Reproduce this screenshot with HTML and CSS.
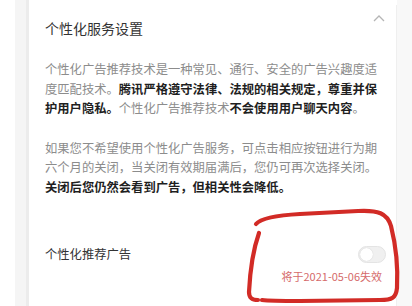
FILE: index.html
```html
<!DOCTYPE html>
<html lang="zh">
<head>
<meta charset="utf-8">
<link rel="stylesheet" href="styles.css">
</head>
<body>
<div class="page">
  <div class="gutter-white"></div>
  <div class="gutter-gray"></div>
  <div class="card">
    <div class="header">
      <div class="title">个性化服务设置</div>
      <svg class="chevron" width="12" height="7" viewBox="0 0 12 7"><path d="M1 6 L6 1 L11 6" fill="none" stroke="#b5b5b5" stroke-width="1.3"/></svg>
    </div>
    <p class="para">个性化广告推荐技术是一种常见、通行、安全的广告兴趣度适度匹配技术。<b>腾讯严格遵守法律、法规的相关规定，尊重并保护用户隐私。</b>个性化广告推荐技术<b>不会使用用户聊天内容</b>。</p>
    <p class="para">如果您不希望使用个性化广告服务，可点击相应按钮进行为期六个月的关闭，当关闭有效期届满后，您仍可再次选择关闭。<b>关闭后您仍然会看到广告，但相关性会降低。</b></p>
    <div class="setting">
      <div class="setting-row">
        <span class="label">个性化推荐广告</span>
        <span class="toggle"><span class="knob"></span></span>
      </div>
      <div class="expire">将于2021-05-06失效</div>
    </div>
  </div>
  <div class="gutter-right"></div>
  <svg class="marker" width="412" height="306" viewBox="0 0 412 306">
    <path d="M256 224 C262 217 282 215 300 214 L358 211 C378 210 387 213 391 226 C396 246 398 270 397 288 C396 298 392 300 380 300 L300 301 C285 301 270 301 262 300" fill="none" stroke="#d22b26" stroke-width="4.2" stroke-linecap="round"/>
    <path d="M259 233 C253 250 250 272 249 292 C249 298 252 300 258 300" fill="none" stroke="#d22b26" stroke-width="4.2" stroke-linecap="round"/>
  </svg>
</div>
</body>
</html>
```

FILE: styles.css
```css
html, body {
  margin: 0;
  padding: 0;
  background: #ffffff;
}
body {
  font-family: "Noto Sans CJK SC", "Noto Sans", sans-serif;
}
.page {
  position: relative;
  display: flex;
  width: 412px;
  height: 306px;
  overflow: hidden;
}
.gutter-white {
  width: 15px;
  flex: none;
  background: #ffffff;
}
.gutter-gray {
  width: 11px;
  flex: none;
  background: #f5f5f5;
  border-right: 3px solid #ececec;
  margin-right: 2px;
}
.card {
  width: 351px;
  flex: none;
  background: #ffffff;
  margin-top: 5px;
  padding: 13px 0 0 14px;
  border-right: 1px solid #efefef;
}
.gutter-right {
  flex: 1;
  background: #f8f8f8;
}
.header {
  display: flex;
  justify-content: space-between;
  align-items: flex-start;
  padding-right: 11px;
}
.title {
  font-size: 14px;
  line-height: 20px;
  color: #333333;
}
.chevron {
  margin-top: -3px;
}
.para {
  margin: 22px 0 0 0;
  width: 336px;
  font-size: 12.3px;
  line-height: 19.5px;
  color: #8c8c8c;
}
.para + .para {
  margin-top: 20px;
}
.para b {
  color: #1f1f1f;
  font-weight: 700;
}
.setting {
  margin-top: 48px;
  padding-right: 10px;
}
.setting-row {
  display: flex;
  justify-content: space-between;
  align-items: center;
}
.label {
  font-size: 12.3px;
  line-height: 18px;
  color: #333333;
}
.toggle {
  width: 28px;
  height: 17px;
  border-radius: 9px;
  background: #f0f0f0;
  border: 1px solid #e4e4e4;
  box-sizing: border-box;
  position: relative;
}
.knob {
  position: absolute;
  left: 1px;
  top: 1px;
  width: 13px;
  height: 13px;
  border-radius: 50%;
  background: #ffffff;
  box-shadow: 0 0 1px rgba(0,0,0,0.2);
}
.expire {
  text-align: right;
  font-size: 11px;
  line-height: 14px;
  margin-top: 6px;
  padding-right: 4px;
  color: #d56a6a;
}
.marker {
  position: absolute;
  left: 0;
  top: 0;
  pointer-events: none;
}
```
